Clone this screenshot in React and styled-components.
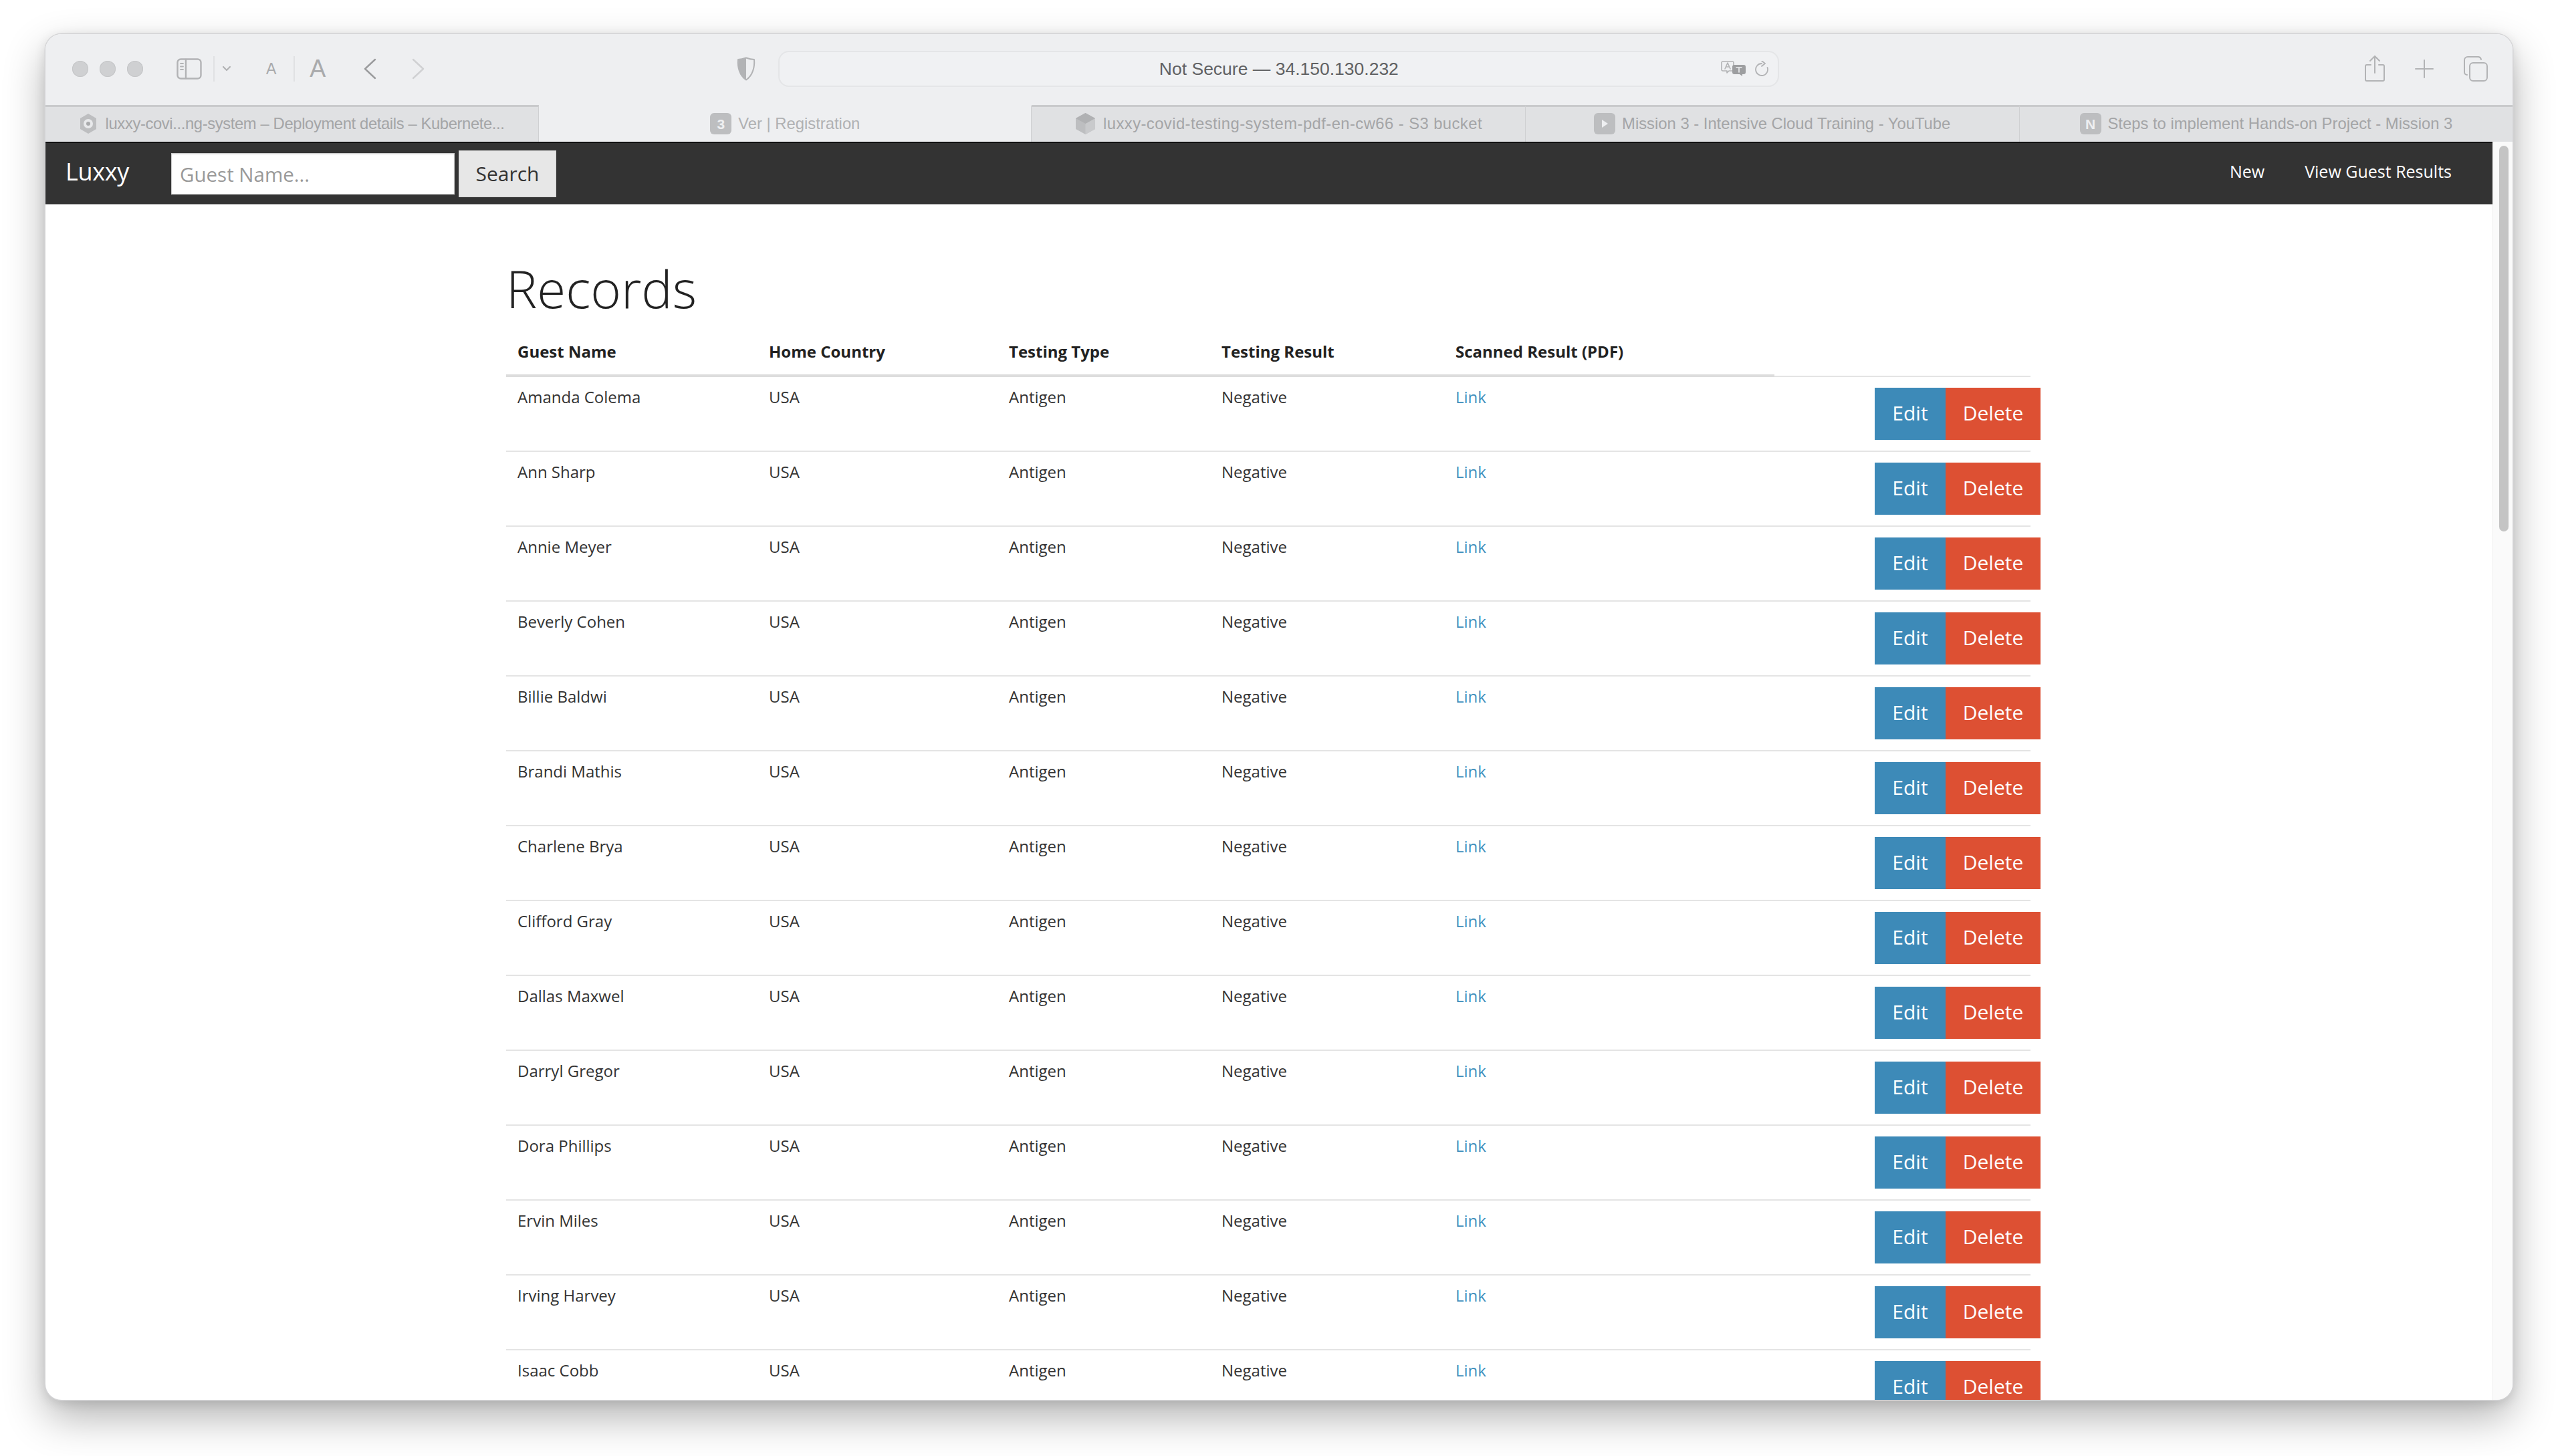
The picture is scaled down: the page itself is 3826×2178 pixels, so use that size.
import React from 'react';
import styled, { createGlobalStyle } from 'styled-components';

const Global = createGlobalStyle`
  html, body { margin: 0; padding: 0; background: #fff; overflow: hidden; }
  #root { height: 2178px; }
`;
const Stage = styled.div`
  box-sizing: border-box;
  height: 2178px;
  padding: 51px 68px 84px;
  background: #fff;
`;
const Win = styled.div`
  height: 100%;
  display: flex;
  flex-direction: column;
  overflow: hidden;
  border-radius: 24px;
  background: #fff;
  box-shadow: 0 0 0 1.5px #d4d4d6, 0 26px 62px rgba(0, 0, 0, 0.3), 0 4px 18px rgba(0, 0, 0, 0.12);
`;
const Toolbar = styled.div`
  flex: none;
  box-sizing: border-box;
  height: 106px;
  padding: 0 0 2px 40px;
  display: flex;
  align-items: center;
  background: #eeeff1;
`;
const Lights = styled.div`
  display: flex;
  gap: 17px;
`;
const Light = styled.span`
  width: 24px;
  height: 24px;
  border-radius: 50%;
  background: #cfd0d2;
  box-shadow: inset 0 0 0 1px #c5c6c8;
`;
const Icon = styled.svg`
  flex: none;
  display: block;
  margin-left: ${p => p.$ml || 0}px;
  fill: none;
  stroke: ${p => p.$c || '#b2b3b5'};
  stroke-width: ${p => p.$sw || 2.4};
  stroke-linecap: round;
  stroke-linejoin: round;
`;
const Sep = styled.span`
  flex: none;
  width: 2px;
  height: 38px;
  margin-left: ${p => p.$ml}px;
  background: #e0e1e3;
`;
const AA = styled.span`
  flex: none;
  margin-left: ${p => p.$ml}px;
  font: ${p => p.$size}px/1 "Liberation Sans", sans-serif;
  color: #a9aaac;
`;
const UrlBar = styled.div`
  flex: none;
  box-sizing: border-box;
  width: 1497px;
  height: 54px;
  margin-left: 34px;
  padding: 0 12px;
  display: grid;
  grid-template-columns: 1fr auto 1fr;
  align-items: center;
  border: 2px solid #e4e5e7;
  border-radius: 16px;
  background: #f0f1f3;
`;
const UrlText = styled.span`
  grid-column: 2;
  font: 26.500px/1 "Liberation Sans", sans-serif;
  color: #606163;
`;
const UrlIcons = styled.div`
  grid-column: 3;
  justify-self: end;
  display: flex;
  align-items: center;
  gap: 13px;
`;
const Tabs = styled.div`
  flex: none;
  height: 55px;
  display: flex;
`;
const Tab = styled.div`
  flex: ${p => p.$w} 0 0;
  box-sizing: border-box;
  padding-bottom: 2px;
  display: flex;
  align-items: center;
  justify-content: center;
  gap: ${p => p.$gap || 10}px;
  background: ${p => (p.$active ? '#eeeff1' : '#e0e1e3')};
  border-top: 3px solid ${p => (p.$active ? '#eeeff1' : '#c9cacc')};
  border-right: 1px solid #cfd0d2;
  font: 23.800px/1 "Liberation Sans", sans-serif;
  letter-spacing: ${p => p.$track || 0}px;
  color: ${p => (p.$active ? '#b0b1b3' : '#a4a5a7')};
  white-space: nowrap;
  &:last-child { border-right: 0; }
`;
const Favicon = styled.span`
  flex: none;
  width: 32px;
  height: 32px;
  display: flex;
  align-items: center;
  justify-content: center;
  border-radius: 6px;
  background: #bdbec0;
  color: #eeeff1;
  font: bold 21px/1 "Liberation Sans", sans-serif;
`;
const Viewport = styled.div`
  flex: 1;
  min-height: 0;
  display: flex;
`;
const Page = styled.div`
  flex: 1;
  min-width: 0;
  overflow: hidden;
  font-family: "Open Sans", sans-serif;
`;
const Track = styled.div`
  flex: none;
  box-sizing: border-box;
  width: 30px;
  padding: 6px 6px 0 9px;
  background: #fafafa;
  border-left: 1px solid #efefef;
`;
const Thumb = styled.div`
  height: 577px;
  border-radius: 8px;
  background: #c4c4c4;
`;
const Navbar = styled.nav`
  box-sizing: border-box;
  height: 94px;
  padding: 0 61px 4px 30px;
  display: flex;
  align-items: center;
  background: #333;
  border-top: 2px solid #111;
  border-bottom: 1px solid #999;
`;
const Brand = styled.a`
  width: 158px;
  margin-top: -2px;
  font-size: 36px;
  line-height: 1;
  color: #fff;
  letter-spacing: -0.300px;
`;
const SearchInput = styled.input`
  box-sizing: border-box;
  width: 424px;
  height: 62px;
  margin-top: 4px;
  padding: 2px 12px 0;
  border: 1px solid #ccc;
  border-radius: 0;
  background: #fff;
  box-shadow: inset 0 1px 2px rgba(0, 0, 0, 0.1);
  font: 29.500px "Open Sans", sans-serif;
  outline: none;
  &::placeholder { color: #999; opacity: 1; }
`;
const SearchButton = styled.button`
  width: 146px;
  height: 70px;
  margin: 4px 0 0 6px;
  padding: 0;
  border: 1px solid #d4d4d4;
  background: #e7e7e7;
  color: #333;
  font: 30px "Open Sans", sans-serif;
`;
const NavLinks = styled.div`
  margin-left: auto;
  margin-top: -3px;
  display: flex;
  gap: 60px;
`;
const NavLink = styled.a`
  font-size: 25px;
  line-height: 1;
  color: #fff;
`;
const Container = styled.main`
  width: 2280px;
  margin-left: 689px;
  padding-top: 70px;
`;
const Title = styled.h1`
  margin: 0;
  font-size: 78px;
  font-weight: 300;
  line-height: 110px;
  color: #222;
`;
const Table = styled.table`
  width: 2280px;
  table-layout: fixed;
  border-collapse: separate;
  border-spacing: 0;
`;
const Th = styled.th`
  box-sizing: border-box;
  width: ${p => p.$w}px;
  padding: 24px 17px ${p => (p.$thin ? 20 : 18)}px;
  border-bottom: ${p => (p.$thin ? 2 : 4)}px solid ${p => (p.$thin ? '#e4e4e4' : '#ddd')};
  text-align: left;
  font-size: 24px;
  font-weight: 700;
  line-height: 32px;
  color: #222;
`;
const Td = styled.td`
  padding: 14px 17px 18px;
  border-bottom: 2px solid #e4e4e4;
  vertical-align: top;
  font-size: 24px;
  line-height: 32px;
  color: #333;
  white-space: nowrap;
`;
const ActionCell = styled(Td)`
  padding: 16px 0 16px 17px;
`;
const ResultLink = styled.a`
  color: #3f8fbd;
`;
const Actions = styled.div`
  display: flex;
  justify-content: flex-end;
  margin-right: -15px;
`;
const ActionButton = styled.button`
  width: ${p => p.$w}px;
  height: 78px;
  padding: 0 0 4px;
  border: 0;
  background: ${p => p.$bg};
  color: #fff;
  font: 30px "Open Sans", sans-serif;
`;

const names = ['Amanda Colema', 'Ann Sharp', 'Annie Meyer', 'Beverly Cohen', 'Billie Baldwi', 'Brandi Mathis', 'Charlene Brya', 'Clifford Gray', 'Dallas Maxwel', 'Darryl Gregor', 'Dora Phillips', 'Ervin Miles', 'Irving Harvey', 'Isaac Cobb'];
const cols = [['Guest Name', 376], ['Home Country', 359], ['Testing Type', 318], ['Testing Result', 350], ['Scanned Result (PDF)', 494]];

export default function App() {
  return (
    <Stage>
      <Global />
      <Win>
        <Toolbar>
          <Lights><Light /><Light /><Light /></Lights>
          <Icon $ml={50} width="38" height="32" viewBox="0 0 38 32">
            <rect x="1.5" y="1.5" width="35" height="29" rx="5" />
            <path d="M14 2v28" />
            <path d="M6 8h4M6 12.500h4M6 17h4" strokeWidth="1.800" />
          </Icon>
          <Sep $ml={17} />
          <Icon $ml={11} $sw={2.2} width="14" height="10" viewBox="0 0 14 10"><path d="M2 2l5 5 5-5" /></Icon>
          <AA $ml={52} $size={23}>A</AA>
          <Sep $ml={26} />
          <AA $ml={22} $size={36}>A</AA>
          <Icon $ml={56} $c="#9a9b9d" width="20" height="32" viewBox="0 0 20 32"><path d="M18 2L3 16l15 14" /></Icon>
          <Icon $ml={53} $c="#d0d1d3" width="20" height="32" viewBox="0 0 20 32"><path d="M2 2l15 14L2 30" /></Icon>
          <Icon $ml={466} $sw={2} width="28" height="36" viewBox="0 0 28 36">
            <path d="M14 1.500C10 3 6 4 2 4c-1 11 2 24 12 30.500C24 28 27 15 26 4c-4 0-8-1-12-2.500z" />
            <path d="M14 2C10 3 6 4 2.500 4.500c-1 11 2 23 11.500 29.500z" fill="#b2b3b5" stroke="none" />
          </Icon>
          <UrlBar>
            <UrlText>Not Secure — 34.150.130.232</UrlText>
            <UrlIcons>
              <Icon $sw={1.600} width="38" height="24" viewBox="0 0 38 24">
                <path d="M3 1h14a2 2 0 012 2v10a2 2 0 01-2 2h-5l-3 3v-3H3a2 2 0 01-2-2V3a2 2 0 012-2z" />
                <path d="M6 12l4-9 4 9M7.500 9h5" />
                <path d="M20 6h14a3 3 0 013 3v8a3 3 0 01-3 3h-2v3l-4-3h-8a3 3 0 01-3-3V9a3 3 0 013-3z" fill="#9d9ea0" stroke="none" />
                <path d="M23 10h8M27 10v7" stroke="#eeeff1" />
              </Icon>
              <Icon $sw={1.800} width="22" height="24" viewBox="0 0 22 24">
                <path d="M10 4a9 9 0 108.500 6" />
                <path d="M10 0l5 4-5 4" />
              </Icon>
            </UrlIcons>
          </UrlBar>
          <Icon $ml={876} $sw={2} width="30" height="40" viewBox="0 0 30 40">
            <path d="M9 14H3a2 2 0 00-2 2v20a2 2 0 002 2h24a2 2 0 002-2V16a2 2 0 00-2-2h-6" />
            <path d="M15 26V2M8 8l7-7 7 7" />
          </Icon>
          <Icon $ml={45} $sw={2} width="28" height="28" viewBox="0 0 28 28"><path d="M14 1v26M1 14h26" /></Icon>
          <Icon $ml={45} $sw={2} width="36" height="38" viewBox="0 0 36 38">
            <rect x="9" y="10" width="26" height="27" rx="5" />
            <path d="M5 28a4 4 0 01-4-4V6a5 5 0 015-5h16a5 5 0 014 4" />
          </Icon>
        </Toolbar>
        <Tabs>
          <Tab $w={738} $track={-0.38} $gap={13}>
            <Icon width="26" height="32" viewBox="0 0 26 32" $sw={0}>
              <path d="M13 1l12 7v16l-12 7-12-7V8z" fill="#bdbec0" stroke="none" />
              <circle cx="13" cy="16" r="7" fill="#e8e9eb" stroke="none" />
              <circle cx="13" cy="16" r="3" fill="#a9aaac" stroke="none" />
            </Icon>
            luxxy-covi...ng-system – Deployment details – Kubernete...
          </Tab>
          <Tab $w={737} $active><Favicon>3</Favicon>Ver | Registration</Tab>
          <Tab $w={738} $track={0.44}>
            <Icon width="33" height="32" viewBox="0 0 33 32" $sw={0}>
              <path d="M16.500 0L31 8v16l-14.500 8L2 24V8z" fill="#bdbec0" stroke="none" />
              <path d="M16.500 16L31 8v16l-14.500 8z" fill="#c9cacc" stroke="none" />
              <path d="M16.500 16L2 8l14.500-8L31 8z" fill="#b0b1b3" stroke="none" />
            </Icon>
            luxxy-covid-testing-system-pdf-en-cw66 - S3 bucket
          </Tab>
          <Tab $w={739}>
            <Favicon>
              <svg width="12" height="14" viewBox="0 0 12 14"><path d="M2 1l9 6-9 6z" fill="#eeeff1" /></svg>
            </Favicon>
            Mission 3 - Intensive Cloud Training - YouTube
          </Tab>
          <Tab $w={738}><Favicon>N</Favicon>Steps to implement Hands-on Project - Mission 3</Tab>
        </Tabs>
        <Viewport>
          <Page>
            <Navbar>
              <Brand>Luxxy</Brand>
              <SearchInput placeholder="Guest Name..." />
              <SearchButton>Search</SearchButton>
              <NavLinks>
                <NavLink>New</NavLink>
                <NavLink>View Guest Results</NavLink>
              </NavLinks>
            </Navbar>
            <Container>
              <Title>Records</Title>
              <Table>
                <thead>
                  <tr>
                    {cols.map(([label, w]) => <Th key={label} $w={w}>{label}</Th>)}
                    <Th $w={383} $thin />
                  </tr>
                </thead>
                <tbody>
                  {names.map(name => (
                    <tr key={name}>
                      <Td>{name}</Td>
                      <Td>USA</Td>
                      <Td>Antigen</Td>
                      <Td>Negative</Td>
                      <Td><ResultLink>Link</ResultLink></Td>
                      <ActionCell>
                        <Actions>
                          <ActionButton $w={106} $bg="#3d8ab8">Edit</ActionButton>
                          <ActionButton $w={142} $bg="#dd5033">Delete</ActionButton>
                        </Actions>
                      </ActionCell>
                    </tr>
                  ))}
                </tbody>
              </Table>
            </Container>
          </Page>
          <Track><Thumb /></Track>
        </Viewport>
      </Win>
    </Stage>
  );
}
